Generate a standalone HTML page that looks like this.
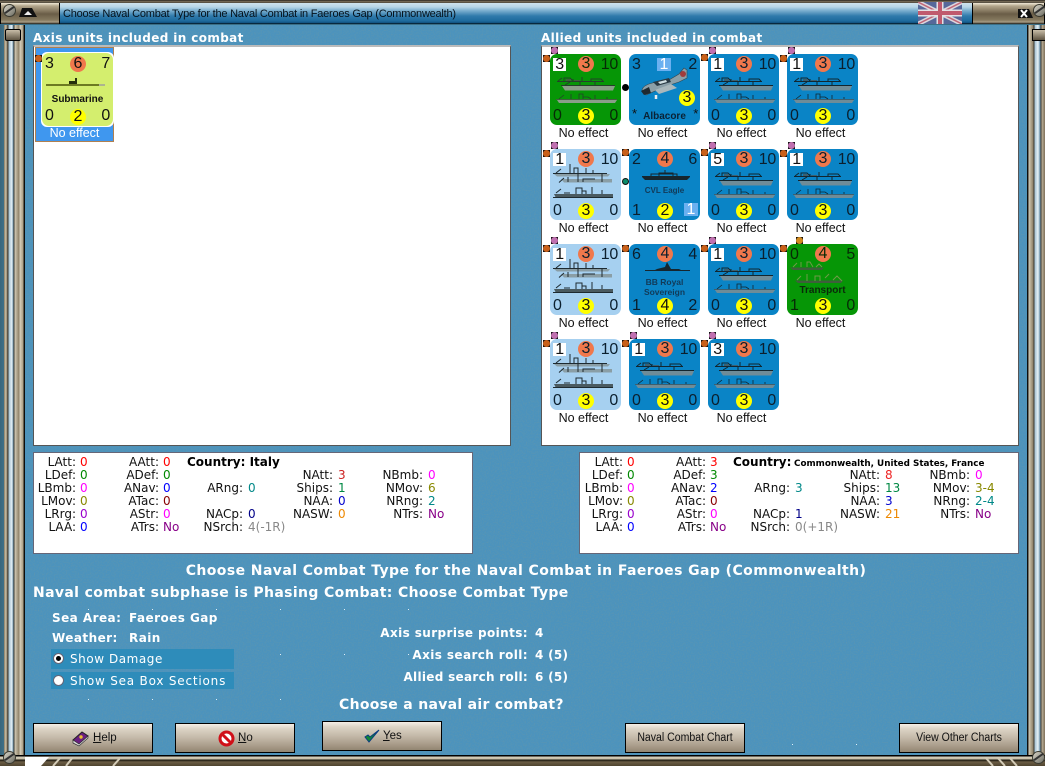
<!DOCTYPE html>
<html><head><meta charset="utf-8"><title>Naval Combat</title>
<style>
html,body{margin:0;padding:0}
body{width:1045px;height:766px;position:relative;overflow:hidden;background:#3b6f86;font-family:"DejaVu Sans","Liberation Sans",sans-serif}
div,span,svg{position:absolute}
#bg{left:25px;top:25px;width:1002px;height:730px;background:#4c93bd}
.dt{width:1px;height:1px;background:#dfeef6}
.lf{left:0;top:25px;width:25px;height:735px;background:linear-gradient(90deg,#39667c 0,#3f7088 4px,#8a7c64 4px,#cfc6ae 6px,#7e705a 7px,#3c3a34 8px,#a9c4d4 9px,#e6f1f6 12px,#6d93aa 13px,#3a3a32 14px,#cfc7b2 15px,#8f8269 19px,#d6cfbc 20px,#ab9f86 23px,#1c1c18 24px,#000 25px)}
.rf{left:1027px;top:25px;width:18px;height:735px;background:linear-gradient(90deg,#000 0,#1c1c18 1px,#cfc7b2 2px,#8f8269 6px,#3a3a32 7px,#a9c4d4 8px,#e6f1f6 11px,#6d93aa 13px,#3c3a34 14px,#b8ac94 15px,#7e705a 18px)}
.tb{left:0;top:0;width:1045px;height:3px;background:linear-gradient(#2a2620,#8d8068 70%,#1b1a16)}
.ttl{left:60px;top:3px;width:912px;height:21px;background:linear-gradient(#cfe3ee 0,#b7d5e6 4px,#83b5d3 7px,#2f7aab 13px,#1d6a9d 18px,#0f4f7d 20px,#000 21px)}
.cap{top:3px;height:21px;background:linear-gradient(#f0e8d6 0,#b3a68c 3px,#6a5d47 11px,#85795f 17px,#a89c84 19px,#1a1a14 21px);border-right:1px solid #000;border-left:1px solid #000;box-sizing:border-box}
.screw{width:13px;height:13px;border-radius:50%;background:linear-gradient(135deg,#d9d5c8,#6c6c62);border:1px solid #3a3a30;box-sizing:border-box}
.screw:after{content:"";position:absolute;left:0;top:4px;width:11px;height:2px;background:#333;transform:rotate(-35deg)}
.bot{left:0;top:755px;width:1045px;height:11px;background:linear-gradient(#000 0,#000 1px,#d4ccb8 2px,#c8bfa8 4px,#1c1810 5px,#6a5c44 7px,#4f4430 11px)}
.p{background:#fff;box-sizing:border-box;border:1px solid #555;border-top:2px solid #bbb}
.h{color:#fff;font-weight:bold;font-size:12px;white-space:nowrap;line-height:14px;letter-spacing:.38px}
.st{background:#fff;box-sizing:border-box;border:1px solid #667;width:440px;height:102px;top:452px;font-size:12px;line-height:13px;color:#111}
.k{white-space:nowrap;text-align:right;width:80px}
.v{white-space:nowrap}
.c{width:71px;height:71px;border-radius:7px;color:#0b1f2e;font-family:"Liberation Sans",sans-serif}
.b{background:#0a84c6}.l{background:#a6d0f0}.g{background:#069606;color:#062a06}
.b,.l{--h:#6f8c98;--d:#12262f;--e:#3e5f6e}.l{--h:#8a9ea6;--d:#1e2a30;--e:#4a5a60}
.g{--h:#8a9e88;--d:#24402a;--e:#3f5f3c}
.c svg{left:0;top:0;width:71px;height:71px}
.n{font-size:16px;line-height:16px;letter-spacing:-.3px;white-space:nowrap}
.tl{left:3px;top:3px}.tr{right:3px;top:3px}.bl{left:3px;top:54px}.br{right:3px;top:54px}
.w{left:3px;top:4px;width:13px;height:13px;background:#fff;color:#111;text-align:center;line-height:14px}
.o,.y{left:28px;width:16px;height:16px;border-radius:50%;text-align:center;font-size:16px;line-height:16px}
.o{top:2px;background:#f0784c}.y{top:54px;background:#ff0;color:#111}
.e{left:-2px;top:72px;width:71px;text-align:center;font-size:12.5px;line-height:15px;color:#111;white-space:nowrap}
.u{font-size:8.5px;line-height:10px;font-weight:bold;text-align:center;left:0;width:71px;color:#123a58;white-space:nowrap}
.m1,.m2,.m3{width:7px;height:7px;background:#111}
.m1:after,.m2:after,.m3:after{content:"";position:absolute;left:0;top:0;width:7px;height:7px;border-radius:50%}
.m1:after{background:#c8601a}.m2:after{background:#c070b0}.m3:after{background:#d08a20}
.lab{color:#fff;font-weight:bold;font-size:12px;white-space:nowrap;line-height:14px;letter-spacing:.45px}
.big{font-size:14px;letter-spacing:.42px}
.band{left:51px;width:183px;background:#2e8cba}
.rad{left:53px;width:11px;height:11px;border-radius:50%;background:#fff;border:1px solid #667;box-sizing:border-box}
.rt{color:#fff;font-size:12px;left:70px;white-space:nowrap;letter-spacing:.55px;line-height:14px}
.btn{width:120px;height:30px;box-sizing:border-box;border:1px solid #000;background:linear-gradient(#f4efe6 0,#dcd3c5 5px,#c3b8a8 14px,#a99c8a 22px,#8f826e 29px);font-family:"Liberation Sans",sans-serif;font-size:11.5px;color:#111;text-align:center;line-height:29px;white-space:nowrap}
.btn u{text-decoration:underline}
.tx{left:0;top:0;width:100%;transform:scaleX(.915)}
</style></head><body>
<svg width="0" height="0" style="left:0;top:0">
<defs>
<symbol id="s" viewBox="0 0 71 71">
<path d="M7 27.500H54M8 27L12 24M14 27V24H20L23 27M23 27V25M32 27V23M41 27V25H51L53 27" style="fill:none;stroke:var(--d);stroke-width:1"/>
<path d="M16 25h5v2h-5zM24 26h6v1h-6z" style="fill:var(--e)"/>
<path d="M12 32H65L63 36.500H15Z" style="fill:var(--h)"/>
<path d="M11 31.500H65M15 31L20 28M30 31V28M45 31V28" style="fill:none;stroke:var(--d);stroke-width:1"/>
<path d="M7 46H67L65 49H9Z" style="fill:var(--h)"/>
<path d="M6 45.500H67" style="stroke:var(--e);stroke-width:1"/>
<path d="M9 45L14 41M21 45V40M29 45V40H33V45M33 43H38L41 45M45 45V41M57 45V43" style="fill:none;stroke:var(--d);stroke-width:.8"/>
</symbol>
<symbol id="s2" viewBox="0 0 71 71">
<path d="M4 25H60L58 27.500H7Z" style="fill:var(--h)"/>
<path d="M3 24.500H57M6 24L11 20M20 24V15M24 24V19H28V24M36 24V19M43 24V21" style="fill:none;stroke:var(--d);stroke-width:1"/>
<path d="M11 30H62V33.500H14Z" style="fill:var(--h)"/>
<path d="M9 33.500L14 29M18 33V28M28 33V25M33 33V30H45M52 33V25" style="fill:none;stroke:var(--d);stroke-width:1"/>
<path d="M4 45H63V49H6Z" style="fill:var(--e)"/>
<path d="M3 48.500H63M6 44L11 40M14 44H20M26 45V39H32V45M32 42H36V45M42 45V38M52 45V41" style="fill:none;stroke:var(--d);stroke-width:1"/>
</symbol>
<symbol id="t" viewBox="0 0 71 71">
<path d="M3 23.500H37L35 26H6Z" style="fill:var(--e)"/>
<path d="M6 23L10 19M14 23V18M20 23V18H23L26 23M29 23L32 20L35 23" style="fill:none;stroke:#6f9a48;stroke-width:1"/>
<path d="M8 36.500H56L54 39H11Z" style="fill:var(--e)"/>
<path d="M10 36L14 32M20 37V30M28 37V32H33V37M38 34L42 30M46 36L50 32L55 37" style="fill:none;stroke:#6f9a48;stroke-width:1"/>
</symbol>
</defs>
</svg>

<div id="bg"></div>
<svg style="left:25px;top:25px" width="1002" height="730"><filter id="nz" x="0" y="0" width="100%" height="100%"><feTurbulence type="fractalNoise" baseFrequency=".75" numOctaves="2" seed="4"/><feColorMatrix values="0 0 0 0 .1  0 0 0 0 .3  0 0 0 0 .45  3 0 0 0 -1.350"/></filter><rect width="1002" height="730" filter="url(#nz)"/></svg>

<div class="lf"></div><div class="rf"></div><div class="tb"></div>
<div class="ttl"></div>
<div style="left:63px;top:7px;font:11px/14px 'Liberation Sans',sans-serif;letter-spacing:-.23px;color:#05121c;white-space:nowrap">Choose Naval Combat Type for the Naval Combat in Faeroes Gap (Commonwealth)</div>
<div class="cap" style="left:0;width:60px"></div>
<div class="cap" style="left:972px;width:73px"></div>
<div style="left:5px;top:29px;width:14px;height:10px;background:linear-gradient(#c8bda8,#5e5442);border:1px solid #000;border-radius:2px"></div>
<div style="left:1032px;top:29px;width:13px;height:10px;background:linear-gradient(#c8bda8,#5e5442);border:1px solid #000"></div>
<div class="screw" style="left:3px;top:4px"></div>
<div class="screw" style="left:1033px;top:4px"></div>
<svg style="left:18px;top:7px" width="20" height="11"><path d="M4 1H14L19 10H1Z" fill="#111"/><path d="M6 8L10 4L14 8Z" fill="#eee"/></svg>
<svg style="left:1017px;top:8px" width="17" height="11"><path d="M1 1H12L16 10H1Z" fill="#111"/><path d="M4 2L10 9M10 2L4 9" stroke="#fff" stroke-width="2"/></svg>
<svg style="left:918px;top:2px" width="44" height="22" viewBox="0 0 44 22"><rect width="44" height="22" fill="#56689a"/><path d="M0 0L44 22M44 0L0 22" stroke="#dcd8de" stroke-width="4.500"/><path d="M0 0L44 22M44 0L0 22" stroke="#c0687a" stroke-width="1.500"/><path d="M22 0V22M0 11H44" stroke="#e4e0e4" stroke-width="7"/><path d="M22 0V22M0 11H44" stroke="#c05a6e" stroke-width="4"/></svg>

<div class="bot"></div>
<svg style="left:25px;top:757px" width="95" height="9"><path d="M0 0H24L16 9H0Z" fill="#fff"/><path d="M36 0L28 9M48 0L41 9M96 0L88 9" stroke="#d4ccb8" stroke-width="2"/></svg>
<svg style="left:975px;top:757px" width="50" height="9"><path d="M10 0L18 9M22 0L30 9M34 0L42 9" stroke="#d4ccb8" stroke-width="2"/></svg>
<div class="screw" style="left:3px;top:751px"></div>
<div class="screw" style="left:1032px;top:751px"></div>

<div class="h" style="left:33px;top:31px">Axis units included in combat</div>
<div class="h" style="left:541px;top:31px">Allied units included in combat</div>
<div class="p" style="left:33px;top:45px;width:478px;height:401px"></div>
<div class="p" style="left:541px;top:45px;width:478px;height:401px"></div>

<!-- Axis -->
<div style="left:35px;top:47px;width:79px;height:95px;background:#3f97ef;box-sizing:border-box;border:1px solid #b08050"></div>
<div style="left:41px;top:52px;width:73px;height:75px;background:#fff;border-radius:6px"></div>
<div class="c" style="left:42px;top:53px;width:71px;height:73px;background:#d4ee6e;color:#111">
<span class="n tl">3</span><span class="o" style="left:28px;top:3px">6</span><span class="n tr">7</span>
<svg viewBox="0 0 71 71"><path d="M4 32H63" stroke="#6c7a22" stroke-width="2"/><path d="M27 31V28H33V25H35V31Z" fill="#25300c"/><path d="M57 32H63" stroke="#eef" stroke-width="1"/></svg>
<span class="u" style="top:41px;font-size:10px;line-height:12px;color:#111">Submarine</span>
<span class="n bl" style="left:3px;top:55px">0</span><span class="y" style="top:56px">2</span><span class="n br" style="top:55px">0</span>
</div>
<div style="left:36px;top:126px;width:77px;text-align:center;font:12.5px/15px 'Liberation Sans',sans-serif;color:#fff">No effect</div>
<div class="m1" style="left:35px;top:55px"></div>

<!-- Row 1 -->
<div class="c g" style="left:550px;top:54px"><svg><use href="#s"/></svg><span class="n w">3</span><span class="o">3</span><span class="n tr">10</span><span class="n bl">0</span><span class="y">3</span><span class="n br">0</span><span class="e">No effect</span></div>
<div class="c b" style="left:629px;top:54px"><svg viewBox="0 0 71 71"><path d="M13 36C14 31 22 29 28 28L40 26L50 20L55 14L58 16L58 24L50 28L38 32L26 37L17 41Z" fill="#8ca0a8" stroke="#33444c" stroke-width=".6"/><path d="M24 28L40 24L42 28L28 32Z" fill="#2a3a44"/><path d="M29 28L37 26L38 28L31 30Z" fill="#d0dfe2"/><path d="M12 37L20 33L22 39L15 41Z" fill="#1f2a30"/><path d="M26 36L42 30L48 34L30 40Z" fill="#aab8bc"/><circle cx="54" cy="20" r="3" fill="#a03c3c"/><path d="M27 41V45" stroke="#eee" stroke-width="2.500"/></svg><span class="n tl">3</span><span style="left:28px;top:4px;width:14px;height:13px;background:#6bb0f0;color:#fff;font-size:16px;line-height:14px;text-align:center">1</span><span class="n tr">2</span><span class="y" style="left:50px;top:36px">3</span><span class="n" style="left:3px;top:52px;font-size:13px;color:#111">*</span><span class="n" style="right:2px;top:52px;font-size:13px;color:#111">*</span><span class="u" style="top:57px;font-size:10px;line-height:12px;color:#0a2235">Albacore</span><span class="e">No effect</span></div>
<div class="c b" style="left:708px;top:54px"><svg><use href="#s"/></svg><span class="n w">1</span><span class="o">3</span><span class="n tr">10</span><span class="n bl">0</span><span class="y">3</span><span class="n br">0</span><span class="e">No effect</span></div>
<div class="c b" style="left:787px;top:54px"><svg><use href="#s"/></svg><span class="n w">1</span><span class="o">3</span><span class="n tr">10</span><span class="n bl">0</span><span class="y">3</span><span class="n br">0</span><span class="e">No effect</span></div>
<!-- Row 2 -->
<div class="c l" style="left:550px;top:149px"><svg><use href="#s2"/></svg><span class="n w">1</span><span class="o">3</span><span class="n tr">10</span><span class="n bl">0</span><span class="y">3</span><span class="n br">0</span><span class="e">No effect</span></div>
<div class="c b" style="left:629px;top:149px"><svg viewBox="0 0 71 71"><path d="M13 28H61L58 31H16Z" fill="#16262e"/><path d="M13 27.500H61M30 27V24H44V27M36 24V21M22 27V25H48V27" stroke="#16262e" fill="none"/></svg><span class="n tl">2</span><span class="o">4</span><span class="n tr">6</span><span class="u" style="top:37px;font-size:8px">CVL Eagle</span><span class="n bl">1</span><span class="y">2</span><span style="left:55px;top:54px;width:14px;height:13px;background:#6bb0f0;color:#fff;font-size:16px;line-height:14px;text-align:center">1</span><span class="e">No effect</span></div>
<div class="c b" style="left:708px;top:149px"><svg><use href="#s"/></svg><span class="n w">5</span><span class="o">3</span><span class="n tr">10</span><span class="n bl">0</span><span class="y">3</span><span class="n br">0</span><span class="e">No effect</span></div>
<div class="c b" style="left:787px;top:149px"><svg><use href="#s"/></svg><span class="n w">1</span><span class="o">3</span><span class="n tr">10</span><span class="n bl">0</span><span class="y">3</span><span class="n br">0</span><span class="e">No effect</span></div>
<!-- Row 3 -->
<div class="c l" style="left:550px;top:244px"><svg><use href="#s2"/></svg><span class="n w">1</span><span class="o">3</span><span class="n tr">10</span><span class="n bl">0</span><span class="y">3</span><span class="n br">0</span><span class="e">No effect</span></div>
<div class="c b" style="left:629px;top:244px"><svg viewBox="0 0 71 71"><path d="M16 26.500H61" stroke="#16262e" fill="none"/><path d="M24 27H54L50 25H42L38 18L36 23L28 25Z" fill="#16262e"/></svg><span class="n tl">6</span><span class="o">4</span><span class="n tr">4</span><span class="u" style="top:33px;font-size:8.500px;line-height:10px">BB Royal<br><span style="position:static">Sovereign</span></span><span class="n bl">1</span><span class="y">4</span><span class="n br">2</span><span class="e">No effect</span></div>
<div class="c b" style="left:708px;top:244px"><svg><use href="#s"/></svg><span class="n w">1</span><span class="o">3</span><span class="n tr">10</span><span class="n bl">0</span><span class="y">3</span><span class="n br">0</span><span class="e">No effect</span></div>
<div class="c g" style="left:787px;top:244px"><svg><use href="#t"/></svg><span class="n tl">0</span><span class="o">4</span><span class="n tr">5</span><span class="u" style="top:41px;font-size:10px;line-height:12px;color:#0a2a0a">Transport</span><span class="n bl">1</span><span class="y">3</span><span class="n br">0</span><span class="e">No effect</span></div>
<!-- Row 4 -->
<div class="c l" style="left:550px;top:339px"><svg><use href="#s2"/></svg><span class="n w">1</span><span class="o">3</span><span class="n tr">10</span><span class="n bl">0</span><span class="y">3</span><span class="n br">0</span><span class="e">No effect</span></div>
<div class="c b" style="left:629px;top:339px"><svg><use href="#s"/></svg><span class="n w">1</span><span class="o">3</span><span class="n tr">10</span><span class="n bl">0</span><span class="y">3</span><span class="n br">0</span><span class="e">No effect</span></div>
<div class="c b" style="left:708px;top:339px"><svg><use href="#s"/></svg><span class="n w">3</span><span class="o">3</span><span class="n tr">10</span><span class="n bl">0</span><span class="y">3</span><span class="n br">0</span><span class="e">No effect</span></div>

<!-- markers -->
<div class="m1" style="left:543px;top:55px"></div><div class="m2" style="left:551px;top:47px"></div>
<div style="left:622px;top:84px;width:7px;height:7px;border-radius:50%;background:#000"></div>
<div class="m1" style="left:701px;top:54px"></div><div class="m2" style="left:709px;top:47px"></div>
<div class="m1" style="left:780px;top:55px"></div><div class="m2" style="left:788px;top:47px"></div>
<div class="m1" style="left:543px;top:150px"></div><div class="m2" style="left:551px;top:142px"></div>
<div class="m1" style="left:622px;top:149px"></div><div style="left:622px;top:178px;width:7px;height:7px;border-radius:50%;background:#0c8a68;border:1px solid #111;box-sizing:border-box"></div>
<div class="m1" style="left:701px;top:149px"></div><div class="m2" style="left:709px;top:142px"></div>
<div class="m1" style="left:780px;top:150px"></div><div class="m2" style="left:788px;top:142px"></div>
<div class="m1" style="left:543px;top:245px"></div><div class="m2" style="left:551px;top:237px"></div>
<div class="m1" style="left:622px;top:245px"></div>
<div class="m1" style="left:701px;top:245px"></div><div class="m2" style="left:709px;top:237px"></div>
<div class="m1" style="left:780px;top:245px"></div><div class="m3" style="left:796px;top:237px"></div>
<div class="m1" style="left:543px;top:340px"></div><div class="m2" style="left:551px;top:332px"></div>
<div class="m1" style="left:622px;top:340px"></div><div class="m2" style="left:630px;top:332px"></div>
<div class="m1" style="left:701px;top:340px"></div><div class="m2" style="left:709px;top:332px"></div>

<!-- Stats left -->
<div class="st" style="left:33px">
<span class="k" style="left:-38px;top:3px">LAtt:</span><span class="v" style="left:46px;top:3px;color:#f00">0</span>
<span class="k" style="left:-38px;top:16px">LDef:</span><span class="v" style="left:46px;top:16px;color:#080">0</span>
<span class="k" style="left:-38px;top:29px">LBmb:</span><span class="v" style="left:46px;top:29px;color:#f0f">0</span>
<span class="k" style="left:-38px;top:42px">LMov:</span><span class="v" style="left:46px;top:42px;color:#880">0</span>
<span class="k" style="left:-38px;top:55px">LRrg:</span><span class="v" style="left:46px;top:55px;color:#90c">0</span>
<span class="k" style="left:-38px;top:68px">LAA:</span><span class="v" style="left:46px;top:68px;color:#00f">0</span>
<span class="k" style="left:45px;top:3px">AAtt:</span><span class="v" style="left:129px;top:3px;color:#f00">0</span>
<span class="k" style="left:45px;top:16px">ADef:</span><span class="v" style="left:129px;top:16px;color:#080">0</span>
<span class="k" style="left:45px;top:29px">ANav:</span><span class="v" style="left:129px;top:29px;color:#00f">0</span>
<span class="k" style="left:45px;top:42px">ATac:</span><span class="v" style="left:129px;top:42px;color:#800">0</span>
<span class="k" style="left:45px;top:55px">AStr:</span><span class="v" style="left:129px;top:55px;color:#f0f">0</span>
<span class="k" style="left:45px;top:68px">ATrs:</span><span class="v" style="left:129px;top:68px;color:#808">No</span>
<span class="v" style="left:153px;top:3px;font-weight:bold;color:#000;font-size:12px">Country: Italy</span>
<span class="k" style="left:129px;top:29px">ARng:</span><span class="v" style="left:214px;top:29px;color:#088">0</span>
<span class="k" style="left:129px;top:55px">NACp:</span><span class="v" style="left:214px;top:55px;color:#008">0</span>
<span class="k" style="left:129px;top:68px">NSrch:</span><span class="v" style="left:214px;top:68px;color:#888">4(-1R)</span>
<span class="k" style="left:219px;top:16px">NAtt:</span><span class="v" style="left:304px;top:16px;color:#c22">3</span>
<span class="k" style="left:219px;top:29px">Ships:</span><span class="v" style="left:304px;top:29px;color:#084">1</span>
<span class="k" style="left:219px;top:42px">NAA:</span><span class="v" style="left:304px;top:42px;color:#00c">0</span>
<span class="k" style="left:219px;top:55px">NASW:</span><span class="v" style="left:304px;top:55px;color:#e80">0</span>
<span class="k" style="left:309px;top:16px">NBmb:</span><span class="v" style="left:394px;top:16px;color:#f0f">0</span>
<span class="k" style="left:309px;top:29px">NMov:</span><span class="v" style="left:394px;top:29px;color:#880">6</span>
<span class="k" style="left:309px;top:42px">NRng:</span><span class="v" style="left:394px;top:42px;color:#088">2</span>
<span class="k" style="left:326px;top:55px;width:63px">NTrs:</span><span class="v" style="left:394px;top:55px;color:#808">No</span>
</div>

<!-- Stats right -->
<div class="st" style="left:579px">
<span class="k" style="left:-37px;top:3px">LAtt:</span><span class="v" style="left:47px;top:3px;color:#f00">0</span>
<span class="k" style="left:-37px;top:16px">LDef:</span><span class="v" style="left:47px;top:16px;color:#080">0</span>
<span class="k" style="left:-37px;top:29px">LBmb:</span><span class="v" style="left:47px;top:29px;color:#f0f">0</span>
<span class="k" style="left:-37px;top:42px">LMov:</span><span class="v" style="left:47px;top:42px;color:#880">0</span>
<span class="k" style="left:-37px;top:55px">LRrg:</span><span class="v" style="left:47px;top:55px;color:#90c">0</span>
<span class="k" style="left:-37px;top:68px">LAA:</span><span class="v" style="left:47px;top:68px;color:#00f">0</span>
<span class="k" style="left:46px;top:3px">AAtt:</span><span class="v" style="left:130px;top:3px;color:#f00">3</span>
<span class="k" style="left:46px;top:16px">ADef:</span><span class="v" style="left:130px;top:16px;color:#080">3</span>
<span class="k" style="left:46px;top:29px">ANav:</span><span class="v" style="left:130px;top:29px;color:#00f">2</span>
<span class="k" style="left:46px;top:42px">ATac:</span><span class="v" style="left:130px;top:42px;color:#800">0</span>
<span class="k" style="left:46px;top:55px">AStr:</span><span class="v" style="left:130px;top:55px;color:#f0f">0</span>
<span class="k" style="left:46px;top:68px">ATrs:</span><span class="v" style="left:130px;top:68px;color:#808">No</span>
<span class="v" style="left:153px;top:3px;font-weight:bold;color:#000;font-size:12px">Country:</span>
<span class="v" style="left:214px;top:5px;font-weight:bold;color:#000;font-size:8.800px">Commonwealth, United States, France</span>
<span class="k" style="left:130px;top:29px">ARng:</span><span class="v" style="left:215px;top:29px;color:#088">3</span>
<span class="k" style="left:130px;top:55px">NACp:</span><span class="v" style="left:215px;top:55px;color:#008">1</span>
<span class="k" style="left:130px;top:68px">NSrch:</span><span class="v" style="left:215px;top:68px;color:#888">0(+1R)</span>
<span class="k" style="left:220px;top:16px">NAtt:</span><span class="v" style="left:305px;top:16px;color:#e22">8</span>
<span class="k" style="left:220px;top:29px">Ships:</span><span class="v" style="left:305px;top:29px;color:#084">13</span>
<span class="k" style="left:220px;top:42px">NAA:</span><span class="v" style="left:305px;top:42px;color:#00c">3</span>
<span class="k" style="left:220px;top:55px">NASW:</span><span class="v" style="left:305px;top:55px;color:#e80">21</span>
<span class="k" style="left:310px;top:16px">NBmb:</span><span class="v" style="left:395px;top:16px;color:#f0f">0</span>
<span class="k" style="left:310px;top:29px">NMov:</span><span class="v" style="left:395px;top:29px;color:#880">3-4</span>
<span class="k" style="left:310px;top:42px">NRng:</span><span class="v" style="left:395px;top:42px;color:#088">2-4</span>
<span class="k" style="left:327px;top:55px;width:63px">NTrs:</span><span class="v" style="left:395px;top:55px;color:#808">No</span>
</div>

<!-- Text -->
<div class="lab big" style="left:25px;width:1002px;text-align:center;top:564px">Choose Naval Combat Type for the Naval Combat in Faeroes Gap (Commonwealth)</div>
<div class="lab big" style="left:33px;top:586px;letter-spacing:.36px">Naval combat subphase is Phasing Combat: Choose Combat Type</div>
<div class="lab" style="left:52px;top:611px">Sea Area:</div><div class="lab" style="left:129px;top:611px">Faeroes Gap</div>
<div class="lab" style="left:52px;top:631px">Weather:</div><div class="lab" style="left:129px;top:631px">Rain</div>
<div class="band" style="top:649px;height:20px"></div>
<div class="band" style="top:672px;height:17px"></div>
<div class="rad" style="top:653px"></div><div style="left:56px;top:656px;width:5px;height:5px;border-radius:50%;background:#000"></div>
<div class="rad" style="top:675px"></div>
<div class="rt" style="top:652px">Show Damage</div>
<div class="rt" style="top:674px;letter-spacing:.8px">Show Sea Box Sections</div>
<div class="lab" style="left:200px;width:328px;text-align:right;top:626px;letter-spacing:.4px">Axis surprise points:</div><div class="lab" style="left:535px;top:626px">4</div>
<div class="lab" style="left:200px;width:328px;text-align:right;top:648px;letter-spacing:.4px">Axis search roll:</div><div class="lab" style="left:535px;top:648px;letter-spacing:.3px">4 (5)</div>
<div class="lab" style="left:200px;width:328px;text-align:right;top:670px;letter-spacing:.3px">Allied search roll:</div><div class="lab" style="left:535px;top:670px;letter-spacing:.3px">6 (5)</div>
<div class="lab big" style="left:339px;top:698px;letter-spacing:.3px">Choose a naval air combat?</div>

<!-- Buttons -->
<div class="btn" style="left:33px;top:723px"><span style="left:59px;top:0"><u>H</u>elp</span>
<svg style="left:38px;top:7px" width="17" height="16"><path d="M1 9L10 1L16 5L7 14Z" fill="#6a1f80" stroke="#222"/><path d="M1 9L1 12L7 15L16 7L16 5L7 13Z" fill="#ddd" stroke="#333" stroke-width=".7"/><circle cx="9" cy="6" r="1.700" fill="#e8c030"/></svg></div>
<div class="btn" style="left:175px;top:723px"><span style="left:62px;top:0"><u>N</u>o</span>
<svg style="left:42px;top:6px" width="17" height="17"><circle cx="8.500" cy="8.500" r="6.500" fill="#fff" stroke="#d01018" stroke-width="3"/><path d="M4 4L13 13" stroke="#d01018" stroke-width="3"/></svg></div>
<div class="btn" style="left:322px;top:721px"><span style="left:60px;top:0"><u>Y</u>es</span>
<svg style="left:41px;top:6px" width="16" height="16"><path d="M1 9L5 14L15 2L6 9L4 7Z" fill="#108838" stroke="#0a3a80" stroke-width="1"/></svg></div>
<div class="btn" style="left:625px;top:723px"><span class="tx">Naval Combat Chart</span></div>
<div class="btn" style="left:899px;top:723px"><span class="tx">View Other Charts</span></div>

<!-- tiny texture dots -->
<div class="dt" style="left:88px;top:609px"></div><div class="dt" style="left:152px;top:609px"></div><div class="dt" style="left:216px;top:609px"></div><div class="dt" style="left:280px;top:609px"></div><div class="dt" style="left:344px;top:609px"></div><div class="dt" style="left:408px;top:609px"></div>
<div class="dt" style="left:280px;top:654px"></div><div class="dt" style="left:344px;top:654px"></div><div class="dt" style="left:408px;top:654px"></div>
<div class="dt" style="left:88px;top:699px"></div><div class="dt" style="left:152px;top:699px"></div><div class="dt" style="left:216px;top:699px"></div><div class="dt" style="left:280px;top:699px"></div>
<div class="dt" style="left:792px;top:744px"></div><div class="dt" style="left:856px;top:744px"></div>
</body></html>
